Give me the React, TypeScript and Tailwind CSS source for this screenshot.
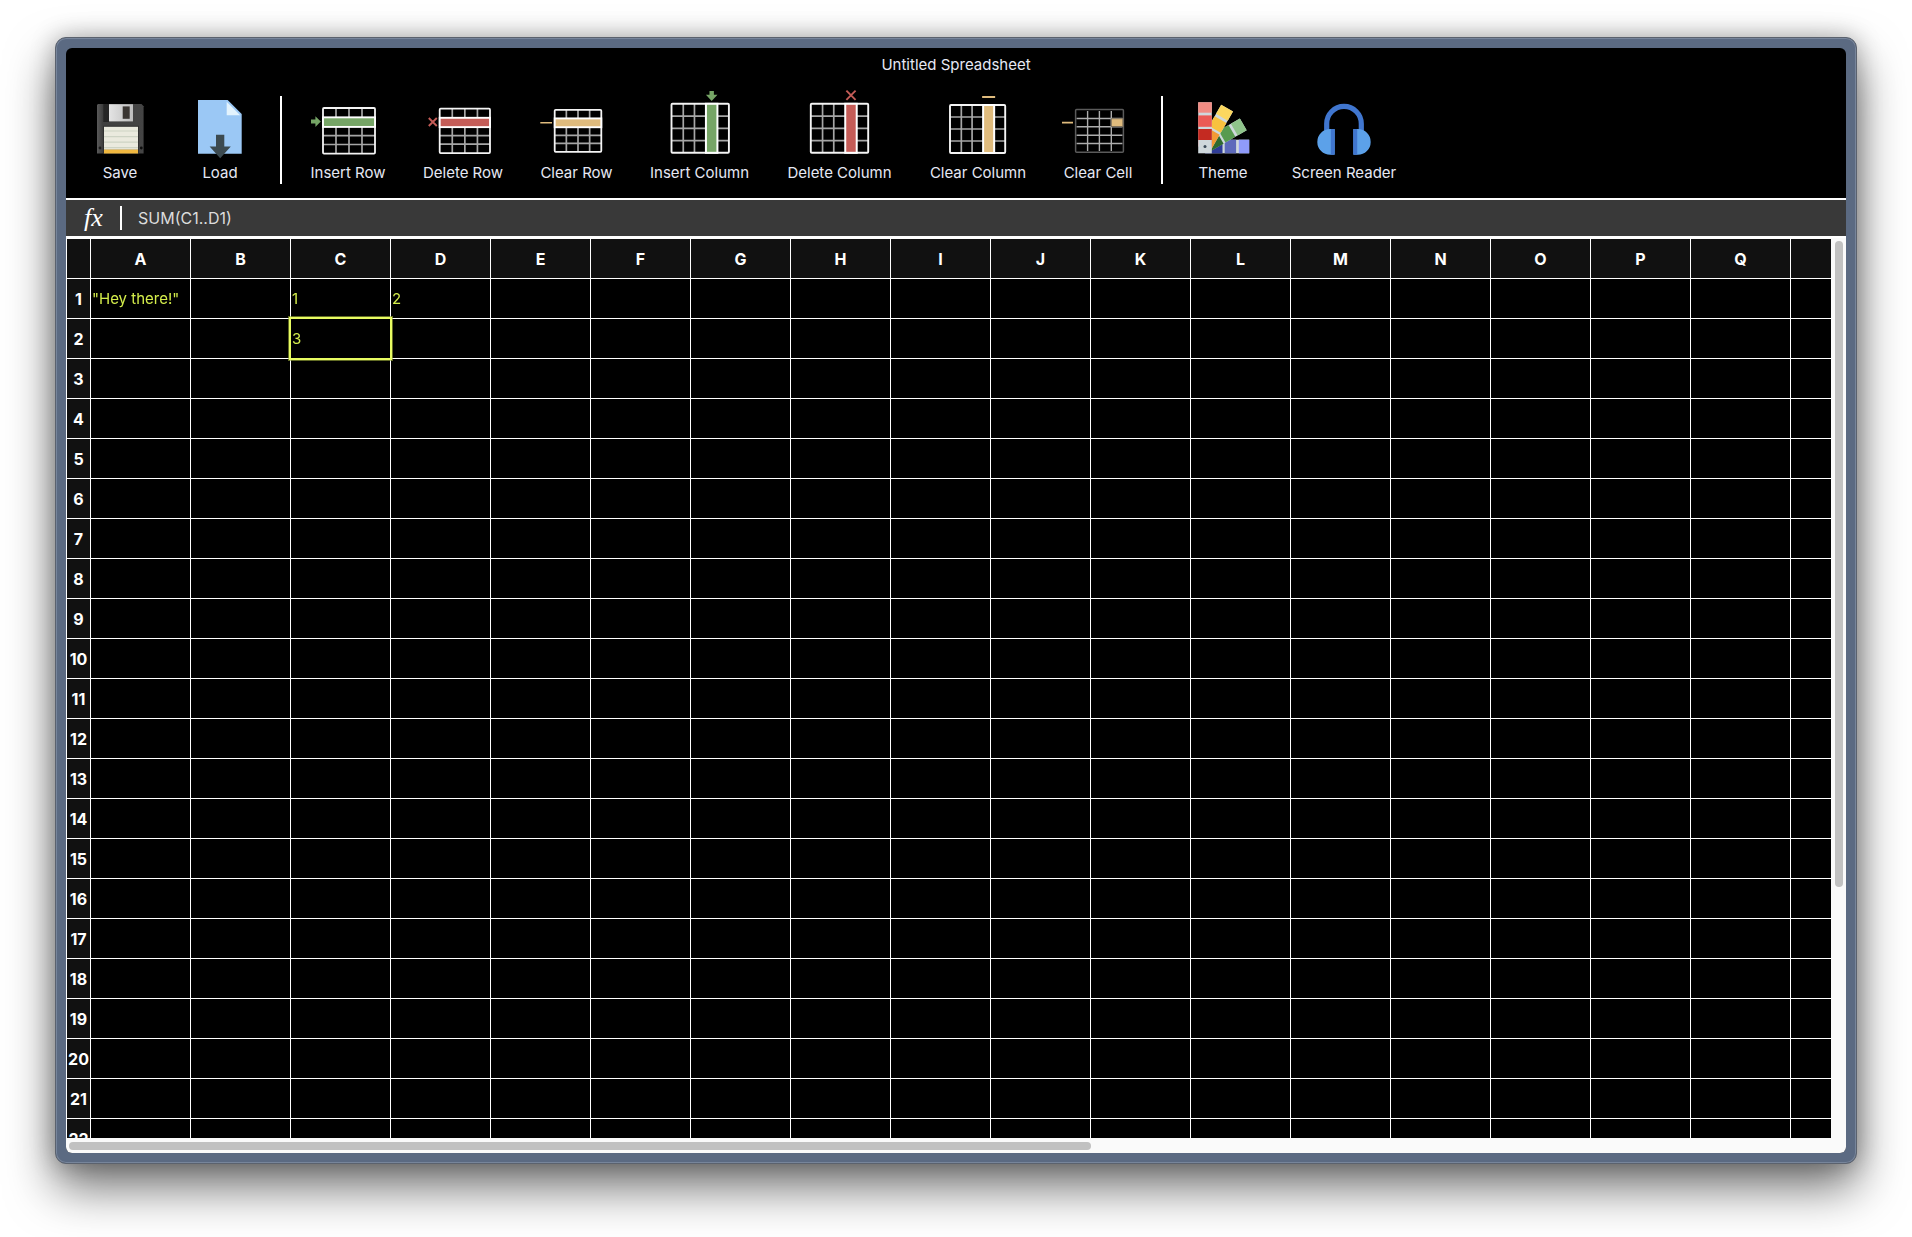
import React, { useState } from "react";

const GREEN = "#76a566";
const RED = "#c45c57";
const SAND = "#dfbb7d";

type MarkKind = "arrow" | "cross" | "dash";

interface GridBox {
  x: number;
  y: number;
  w: number;
  h: number;
}

function Icon({ children }: { children: React.ReactNode }) {
  return (
    <svg viewBox="0 0 64 64" className="h-16 w-16 overflow-visible" aria-hidden="true">
      {children}
    </svg>
  );
}

function Cross({ cx, cy, r }: { cx: number; cy: number; r: number }) {
  return (
    <path
      d={`M${cx - r} ${cy - r}L${cx + r} ${cy + r}M${cx + r} ${cy - r}L${cx - r} ${cy + r}`}
      stroke={RED}
      strokeWidth="1.9"
      fill="none"
    />
  );
}

function RowIcon({ x, y, w, h, color, kind }: GridBox & { color: string; kind: MarkKind }) {
  const cols = [0.25, 0.5, 0.75].map((f) => x + w * f);
  const rows = [0.607, 0.8].map((f) => y + h * f);
  const top = y + h * 0.205;
  const band = h * 0.21;
  const mid = top + band / 2;
  return (
    <Icon>
      <path
        d={cols.map((c) => `M${c} ${y}V${y + h}`).join("") + rows.map((r) => `M${x} ${r}H${x + w}`).join("")}
        stroke="#a6a6a6"
        strokeWidth="1.7"
      />
      <rect x={x} y={y} width={w} height={h} rx="1" fill="none" stroke="#f4f4f4" strokeWidth="1.8" />
      <rect x={x} y={top} width={w} height={band} fill={color} stroke="#fff" strokeWidth="1.9" />
      {kind === "arrow" && <path d="M-5 25.5H-.6V22.2L4.8 27.6L-.6 33V29.6H-5Z" fill={color} />}
      {kind === "cross" && <Cross cx={1.8} cy={28} r={4} />}
      {kind === "dash" && <path d={`M-4.7 ${mid}H7`} stroke={color} strokeWidth="1.6" />}
    </Icon>
  );
}

function ColumnIcon({ x, y, w, h, color, kind }: GridBox & { color: string; kind: MarkKind }) {
  const cols = [0.205, 0.4].map((f) => x + w * f);
  const rows = [0.25, 0.5, 0.75].map((f) => y + h * f);
  const left = x + w * 0.6;
  const band = w * 0.2;
  const mid = left + band / 2;
  return (
    <Icon>
      <path
        d={cols.map((c) => `M${c} ${y}V${y + h}`).join("") + rows.map((r) => `M${x} ${r}H${x + w}`).join("")}
        stroke="#a6a6a6"
        strokeWidth="1.7"
      />
      <rect x={x} y={y} width={w} height={h} rx="1" fill="none" stroke="#f4f4f4" strokeWidth="1.9" />
      <rect x={left} y={y} width={band} height={h} fill={color} stroke="#fff" strokeWidth="2" />
      {kind === "arrow" && (
        <path d={`M${mid - 2.2} -3V.8H${mid - 5.8}L${mid} 7L${mid + 5.8} .8H${mid + 2.2}V-3Z`} fill={color} />
      )}
      {kind === "cross" && <Cross cx={mid} cy={1.3} r={4.6} />}
      {kind === "dash" && <path d={`M${mid - 6.5} 3H${mid + 6.5}`} stroke={color} strokeWidth="1.8" />}
    </Icon>
  );
}

function ClearCellIcon() {
  return (
    <Icon>
      <rect x="9.6" y="15.6" width="47.8" height="42.6" rx="1" fill="none" stroke="#5a5a5a" strokeWidth="1.5" />
      <path
        d="M21.6 17V57M33.4 17V57M45.3 17V57M10.6 24.5H56.4M10.6 32.7H56.4M10.6 41.2H56.4M10.6 49.5H56.4"
        stroke="#adadad"
        strokeWidth="1.4"
      />
      <rect x="45.3" y="24.7" width="11.6" height="7.8" fill={SAND} stroke="#7d705b" strokeWidth="1" />
      <path d="M-4 28.6H7" stroke={SAND} strokeWidth="1.6" />
    </Icon>
  );
}

function SaveIcon() {
  return (
    <Icon>
      <defs>
        <linearGradient id="diskBody" x1="0" x2="1">
          <stop offset="0" stopColor="#5a5a5a" />
          <stop offset=".12" stopColor="#3f3f3f" />
          <stop offset="1" stopColor="#454545" />
        </linearGradient>
        <linearGradient id="diskShutter" x1="0" x2="1">
          <stop offset="0" stopColor="#e4e4e4" />
          <stop offset="1" stopColor="#bdbdbd" />
        </linearGradient>
      </defs>
      <path d="M10 10H53.5L55.6 12.2V59.5H9V11Z" fill="url(#diskBody)" />
      <rect x="15.3" y="10" width="6" height="18" fill="#242424" />
      <rect x="21" y="10.2" width="24" height="17.2" fill="url(#diskShutter)" />
      <rect x="34.7" y="12.4" width="7" height="12.4" fill="#3a3632" />
      <rect x="15" y="31.8" width="36" height="27.7" fill="#303030" />
      <rect x="16" y="32.8" width="34" height="23" fill="#eaeade" />
      <path d="M16 37H50M16 42.6H50M16 48.2H50M16 53.6H50" stroke="#cdd3c4" strokeWidth="1.2" />
      <rect x="16" y="55.6" width="34" height="3.9" fill="#f0b840" />
      <circle cx="12" cy="54" r="1.4" fill="#1c1c1c" />
      <circle cx="53.3" cy="54" r="1.4" fill="#0c0c0c" />
    </Icon>
  );
}

function LoadIcon() {
  return (
    <Icon>
      <path d="M10 6H39.7L53.7 20V59.7H10Z" fill="#9bc8f5" />
      <path d="M38.7 7.8L52.2 21.2H38.7Z" fill="#e3f3fd" />
      <path d="M28 40.7H36.3V52.5H42.8L32.2 64.3L21.6 52.5H28Z" fill="#3c4a50" />
    </Icon>
  );
}

function Swatch({ angle, colors }: { angle: number; colors: [string, string, string] }) {
  return (
    <g transform={`rotate(${angle} 14 52.5)`}>
      <rect x="7.2" y="8.3" width="13.6" height="44" fill="#cfd8dc" />
      <rect x="7.2" y="8.3" width="13.6" height="10.4" fill={colors[0]} />
      <rect x="7.2" y="21.4" width="13.6" height="11.4" fill={colors[1]} />
      <rect x="7.2" y="35" width="13.6" height="17.5" fill={colors[2]} />
    </g>
  );
}

function ThemeIcon() {
  return (
    <Icon>
      <Swatch angle={90} colors={["#8f9bfa", "#5d6abb", "#2f3c97"]} />
      <Swatch angle={60} colors={["#8fc48b", "#589b50", "#2f6a2f"]} />
      <Swatch angle={30} colors={["#fbd75f", "#f8c23f", "#f39a35"]} />
      <Swatch angle={0} colors={["#f18c83", "#eb5a55", "#c42a21"]} />
      <rect x="7.2" y="46" width="13.6" height="13.3" fill="#cfd8dc" />
      <circle cx="14" cy="52.5" r="1.5" fill="#3a4a58" />
    </Icon>
  );
}

function HeadphonesIcon() {
  return (
    <Icon>
      <path d="M14.7 37V29.7A17.3 17.3 0 0 1 49.3 29.7V37" fill="none" stroke="#4076cf" strokeWidth="5.2" />
      <path d="M22.7 35H18.2A12.9 12.9 0 0 0 18.2 60.8H22.7Z" fill="#5ca1e9" />
      <path d="M18.8 35H21.4Q22.7 35 22.7 36.3V59.5Q22.7 60.8 21.4 60.8H18.8Z" fill="#4076cf" />
      <path d="M41.3 35H45.8A12.9 12.9 0 0 1 45.8 60.8H41.3Z" fill="#5ca1e9" />
      <path d="M45.2 35H42.6Q41.3 35 41.3 36.3V59.5Q41.3 60.8 42.6 60.8H45.2Z" fill="#4076cf" />
    </Icon>
  );
}

function Tool({ label, width = "min-w-16", children }: { label: string; width?: string; children: React.ReactNode }) {
  return (
    <button type="button" className={`flex shrink-0 flex-col items-center text-[#e6e8f4] ${width}`}>
      {children}
      <span className="mt-[3px] text-[15px] leading-6 whitespace-nowrap">{label}</span>
    </button>
  );
}

function Divider() {
  return <div className="-mx-2 mt-0.5 h-[88px] w-0.5 shrink-0 bg-white" />;
}

const columns = Array.from({ length: 18 }, (_, i) => String.fromCharCode(65 + i));
const rowNumbers = Array.from({ length: 22 }, (_, i) => i + 1);
const values: Record<string, string> = { A1: '"Hey there!"', C1: "1", D1: "2", C2: "3" };
const selected = "C2";

function Sheet() {
  return (
    <table className="w-[1825px] table-fixed border-separate border-spacing-0 border-l border-white bg-black text-base leading-6">
      <thead>
        <tr className="h-10 bg-[#111111]">
          <th className="w-6 border-r border-b border-white p-0" />
          {columns.map((c) => (
            <th key={c} scope="col" className="w-[100px] border-r border-b border-white p-0 font-bold text-white">
              {c}
            </th>
          ))}
        </tr>
      </thead>
      <tbody>
        {rowNumbers.map((n) => (
          <tr key={n} className="h-10">
            <th scope="row" className="border-r border-b border-white bg-[#111111] p-0 font-bold text-white">
              {n}
            </th>
            {columns.map((c) => {
              const id = c + n;
              return (
                <td
                  key={id}
                  className="relative border-r border-b border-white px-px py-0 text-[15px] whitespace-nowrap text-[#d5ee4b]"
                >
                  {values[id]}
                  {id === selected && (
                    <span className="pointer-events-none absolute -inset-0.5 z-10 border-2 border-[#e8fc62] ring-1 ring-[#a3b43c]/60" />
                  )}
                </td>
              );
            })}
          </tr>
        ))}
      </tbody>
    </table>
  );
}

export default function App() {
  const [formula, setFormula] = useState("SUM(C1..D1)");
  return (
    <div className="flex h-screen flex-col bg-white px-[55px] pt-[37px] pb-[73px] font-['Inter','Liberation_Sans',sans-serif]">
      <div className="flex min-h-0 flex-1 flex-col rounded-[11px] border border-[#5b626e] bg-[#5b6a82] p-2.5 shadow-[inset_0_0_0_1px_#77859b,0_24px_48px_rgba(0,0,0,0.55),0_0_24px_rgba(0,0,0,0.28)]">
        <main className="flex min-h-0 flex-1 flex-col overflow-hidden rounded-md bg-black">
          <header className="shrink-0">
            <h1 className="pt-[5px] text-center text-[15px] leading-6 text-[#e6e8f4]">Untitled Spreadsheet</h1>
            <nav aria-label="Tools" className="mt-[17px] flex h-[104px] gap-9 px-[22px]">
              <Tool label="Save">
                <SaveIcon />
              </Tool>
              <Tool label="Load">
                <LoadIcon />
              </Tool>
              <Divider />
              <Tool label="Insert Row" width="min-w-[76px]">
                <RowIcon x={7} y={14} w={52} h={45.6} color={GREEN} kind="arrow" />
              </Tool>
              <Tool label="Delete Row" width="min-w-[82px]">
                <RowIcon x={8.7} y={14.7} w={50.3} h={44.4} color={RED} kind="cross" />
              </Tool>
              <Tool label="Clear Row" width="min-w-[73px]">
                <RowIcon x={9.7} y={15.8} w={46.6} h={42} color={SAND} kind="dash" />
              </Tool>
              <Tool label="Insert Column" width="min-w-[101px]">
                <ColumnIcon x={3.5} y={9.8} w={57.4} h={49} color={GREEN} kind="arrow" />
              </Tool>
              <Tool label="Delete Column" width="min-w-[107px]">
                <ColumnIcon x={2.8} y={9.8} w={57.4} h={49} color={RED} kind="cross" />
              </Tool>
              <Tool label="Clear Column" width="min-w-[98px]">
                <ColumnIcon x={4} y={11} w={55.2} h={48} color={SAND} kind="dash" />
              </Tool>
              <Tool label="Clear Cell" width="min-w-[70px]">
                <ClearCellIcon />
              </Tool>
              <Divider />
              <Tool label="Theme">
                <ThemeIcon />
              </Tool>
              <Tool label="Screen Reader" width="min-w-[106px]">
                <HeadphonesIcon />
              </Tool>
            </nav>
          </header>
          <div className="flex h-10 shrink-0 items-center border-y-2 border-white bg-[#393939]">
            <label
              htmlFor="formula"
              className="w-[54px] pl-[18px] font-['Liberation_Serif',serif] text-[26px] leading-6 text-white italic"
            >
              fx
            </label>
            <div className="h-6 w-0.5 bg-white" />
            <input
              id="formula"
              value={formula}
              onChange={(e) => setFormula(e.target.value)}
              className="min-w-0 flex-1 bg-transparent px-4 text-base leading-6 text-[#dcdcdc] outline-none"
            />
          </div>
          <div className="grid min-h-0 flex-1 grid-cols-[minmax(0,1fr)_15px] grid-rows-[minmax(0,1fr)_15px] bg-[#fafafa]">
            <div className="overflow-auto border-t border-white [scrollbar-width:none]">
              <Sheet />
            </div>
            <div className="px-1 pt-[3px]">
              <div className="h-[72%] w-2 rounded-full bg-[#c1c1c1]" />
            </div>
            <div className="py-1 pl-[3px]">
              <div className="h-2 w-[58%] rounded-full bg-[#c1c1c1]" />
            </div>
          </div>
        </main>
      </div>
    </div>
  );
}
